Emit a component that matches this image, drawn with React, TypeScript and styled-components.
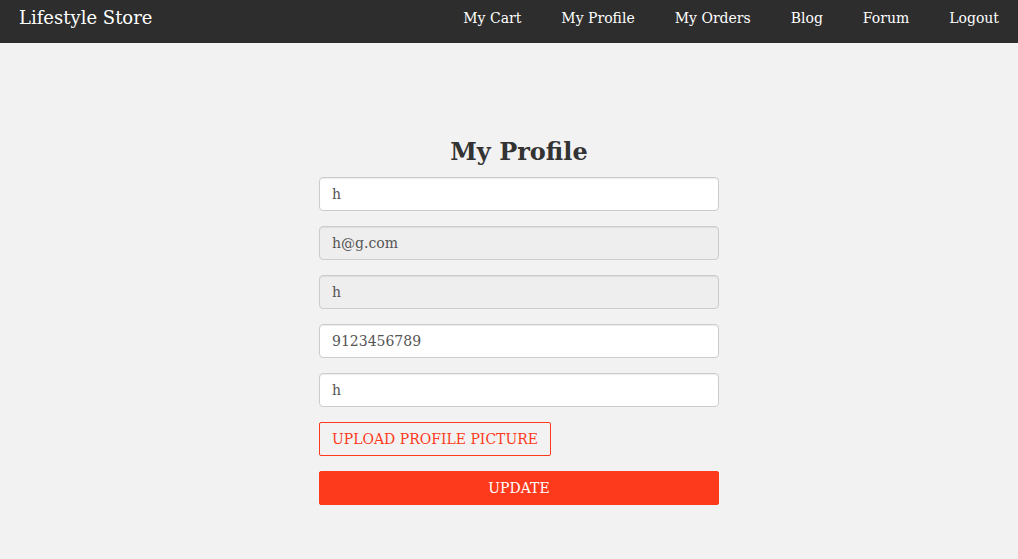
import React from 'react'
import styled, {createGlobalStyle} from 'styled-components'

const GlobalStyle = createGlobalStyle`
  html, body {
    margin: 0;
    padding: 0;
    background: #f2f2f2;
    font-family: "DejaVu Serif", serif;
    color: #333;
  }
  * {
    box-sizing: border-box;
  }
`

const Navbar = styled.nav`
  height: 43px;
  background: #2d2d2d;
  display: flex;
  justify-content: space-between;
  align-items: flex-start;
`

const Brand = styled.a`
  color: #fff;
  font-size: 18px;
  line-height: 24px;
  padding: 6px 0 0 19px;
  text-decoration: none;
`

const NavList = styled.ul`
  display: flex;
  list-style: none;
  margin: 0 -1px 0 0;
  padding: 0;
`

const NavLink = styled.a`
  display: block;
  color: #fff;
  font-size: 14px;
  line-height: 20px;
  padding: 8px 20px;
  text-decoration: none;
`

const Main = styled.main`
  width: 400px;
  margin-left: calc(50% - 190px);
  padding-top: 92px;
  display: flex;
  flex-direction: column;
  gap: 15px;
`

const Title = styled.h2`
  margin: 2px 0 -5px;
  text-align: center;
  font-size: 24px;
  line-height: 30px;
  font-weight: bold;
  color: #333;
`

const Input = styled.input`
  width: 100%;
  height: 34px;
  padding: 6px 12px;
  font-family: "DejaVu Serif", serif;
  font-size: 14px;
  color: #555;
  background: #fff;
  border: 1px solid #ccc;
  border-radius: 4px;
  box-shadow: inset 0 1px 1px rgba(0, 0, 0, 0.075);

  &:disabled {
    background: #eee;
    color: #555;
    opacity: 1;
  }
`

const Button = styled.button<{$filled?: boolean}>`
  height: 34px;
  padding: 6px 12px;
  font-family: "DejaVu Serif", serif;
  font-size: 14px;
  border: 1px solid #fd3a1c;
  border-radius: 2px;
  color: ${(p) => (p.$filled ? '#fff' : '#fd3a1c')};
  background: ${(p) => (p.$filled ? '#fd3a1c' : 'transparent')};
  width: ${(p) => (p.$filled ? '100%' : 'auto')};
  align-self: flex-start;
  cursor: pointer;
`

const links = ['My Cart', 'My Profile', 'My Orders', 'Blog', 'Forum', 'Logout']

const App: React.FC = () => {
  return (
    <>
      <GlobalStyle />
      <Navbar>
        <Brand href="#">Lifestyle Store</Brand>
        <NavList>
          {links.map((l) => (
            <li key={l}>
              <NavLink href="#">{l}</NavLink>
            </li>
          ))}
        </NavList>
      </Navbar>

      <Main>
        <Title>My Profile</Title>
        <Input defaultValue="h" />
        <Input defaultValue="h@g.com" disabled />
        <Input defaultValue="h" disabled />
        <Input defaultValue="9123456789" />
        <Input defaultValue="h" />
        <Button type="button">UPLOAD PROFILE PICTURE</Button>
        <Button type="button" $filled>UPDATE</Button>
      </Main>
    </>
  )
}

export default App
